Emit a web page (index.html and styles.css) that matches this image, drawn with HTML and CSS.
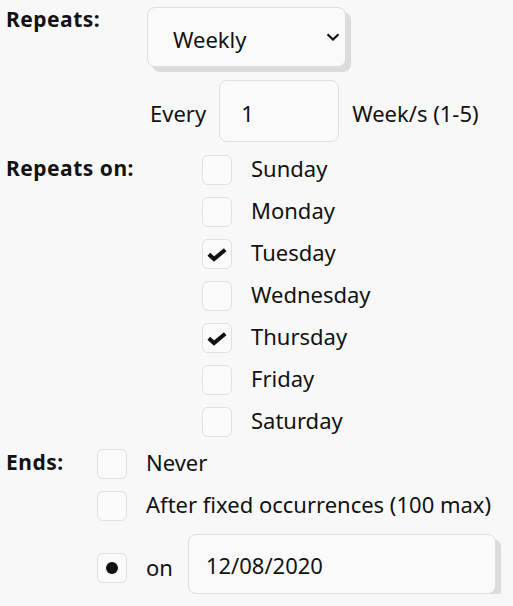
FILE: index.html
```html
<!DOCTYPE html>
<html lang="en">
<head>
<meta charset="utf-8">
<title>Recurrence</title>
<link rel="stylesheet" href="styles.css">
</head>
<body>
<form class="form">
  <div class="row row-repeats">
    <div class="label">Repeats:</div>
    <div class="select">
      <span class="txt">Weekly</span>
      <svg class="chev" width="14" height="8" viewBox="0 0 14 8"><path d="M1.5 1.2 L7 6.5 L12.5 1.2" fill="none" stroke="#111" stroke-width="2.2"/></svg>
    </div>
  </div>
  <div class="row row-every">
    <span class="txt">Every</span>
    <div class="field num"><span class="txt">1</span></div>
    <span class="txt">Week/s (1-5)</span>
  </div>
  <div class="row row-on">
    <div class="label">Repeats on:</div>
    <ul class="list days">
      <li><span class="box"></span>Sunday</li>
      <li><span class="box"></span>Monday</li>
      <li><span class="box"><svg class="check" width="20" height="14" viewBox="0 0 20 14"><path d="M1.8 6.2 L7 11 L18.2 1.8" fill="none" stroke="#111" stroke-width="4"/></svg></span>Tuesday</li>
      <li><span class="box"></span>Wednesday</li>
      <li><span class="box"><svg class="check" width="20" height="14" viewBox="0 0 20 14"><path d="M1.8 6.2 L7 11 L18.2 1.8" fill="none" stroke="#111" stroke-width="4"/></svg></span>Thursday</li>
      <li><span class="box"></span>Friday</li>
      <li><span class="box"></span>Saturday</li>
    </ul>
  </div>
  <div class="row row-ends">
    <div class="label">Ends:</div>
    <ul class="list ends">
      <li><span class="box"></span>Never</li>
      <li><span class="box"></span>After fixed occurrences (100 max)</li>
      <li class="on-row"><span class="box"><span class="dot"></span></span><span class="on">on</span><div class="date"><span class="txt">12/08/2020</span></div></li>
    </ul>
  </div>
</form>
</body>
</html>
```
FILE: styles.css
```css
html, body {
  margin: 0;
  padding: 0;
  background: #f8f8f8;
}
body {
  font-family: "Noto Sans", "Open Sans", sans-serif;
  font-size: 22px;
  color: #121212;
}
.form {
  padding: 7px 0 0 6px;
}
.row {
  display: flex;
  align-items: flex-start;
}
.label {
  font-weight: bold;
  font-size: 21px;
  letter-spacing: 0.5px;
  line-height: 24px;
}
.row-repeats .label {
  width: 141px;
}
.select {
  box-sizing: border-box;
  width: 199px;
  height: 60px;
  border: 1px solid #dedede;
  border-radius: 8px;
  background: #fafafa;
  box-shadow: 5px 5px 0 #dcdcdc;
  display: flex;
  align-items: center;
  justify-content: space-between;
  padding: 0 5px 0 25px;
}
.select .txt {
  padding-top: 4px;
}
.chev {
  margin-top: -1px;
}
.row-every {
  margin-top: 13px;
  padding-left: 144px;
  align-items: center;
  gap: 13px;
}
.row-every .txt {
  padding-top: 4px;
}
.field {
  box-sizing: border-box;
  width: 120px;
  height: 62px;
  border: 1px solid #dedede;
  border-radius: 8px;
  background: #fafafa;
  display: flex;
  align-items: center;
  padding-left: 21px;
}
.row-on {
  margin-top: 13px;
}
.row-on .label {
  width: 196px;
  margin-top: 1px;
}
.list {
  list-style: none;
  margin: 0;
  padding: 0;
  display: flex;
  flex-direction: column;
  gap: 12px;
}
.list li {
  display: flex;
  align-items: flex-start;
  gap: 19px;
  height: 30px;
  line-height: 26px;
}
.box {
  box-sizing: border-box;
  width: 30px;
  height: 30px;
  border: 1px solid #e0e0e0;
  border-radius: 6px;
  background: #fafafa;
  display: flex;
  align-items: center;
  justify-content: center;
  flex: none;
}
.check {
  margin-left: -1px;
  margin-top: 1px;
}
.row-ends {
  margin-top: 12px;
}
.row-ends .label {
  width: 91px;
  margin-top: 1px;
}
.list li.on-row {
  height: 60px;
  margin-top: 1px;
  gap: 0;
  align-items: center;
  line-height: normal;
}
.on-row .box {
  margin-top: 8px;
}
.on {
  margin-left: 19px;
  margin-right: 15px;
  padding-top: 5px;
}
.dot {
  width: 12px;
  height: 12px;
  border-radius: 50%;
  background: #111;
}
.date {
  box-sizing: border-box;
  width: 308px;
  height: 60px;
  border: 1px solid #dedede;
  border-radius: 8px;
  background: #fafafa;
  box-shadow: 5px 5px 0 #dcdcdc;
  display: flex;
  align-items: center;
  padding-left: 17px;
}
.date .txt {
  padding-top: 2px;
}
```
